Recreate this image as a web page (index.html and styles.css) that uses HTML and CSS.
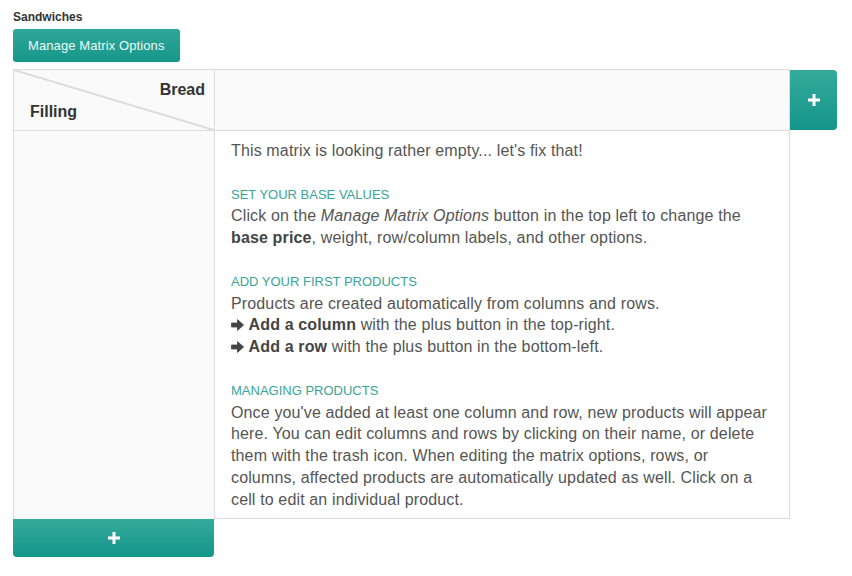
FILE: index.html
```html
<!DOCTYPE html>
<html>
<head>
<meta charset="utf-8">
<link rel="stylesheet" href="styles.css">
</head>
<body>
<div class="field-label">Sandwiches</div>
<button class="btn-manage">Manage Matrix Options</button>
<div class="matrix">
  <div class="corner">
    <svg class="diag" viewBox="0 0 100 100" preserveAspectRatio="none"><line x1="0" y1="0" x2="100" y2="100" stroke="#dcdcdc" stroke-width="2" vector-effect="non-scaling-stroke"/></svg>
    <div class="col-label">Bread</div>
    <div class="row-label">Filling</div>
  </div>
  <div class="head-cells"></div>
  <button class="add-col" aria-label="Add column">
    <svg width="12" height="12" viewBox="0 0 12 12"><path d="M4.5 0h3v4.5H12v3H7.5V12h-3V7.5H0v-3h4.5z" fill="#fff"/></svg>
  </button>
  <div class="row-heads"></div>
  <div class="content">
    <p>This matrix is looking rather empty... let's fix that!</p>
    <div class="block">
      <h4>Set your base values</h4>
      <p>Click on the <em>Manage Matrix Options</em> button in the top left to change the <strong>base price</strong>, weight, row/column labels, and other options.</p>
    </div>
    <div class="block">
      <h4>Add your first products</h4>
      <p>Products are created automatically from columns and rows.</p>
      <p><svg class="arrow" width="13" height="12" viewBox="0 0 13 12"><path d="M0.5 4h6V0.6L12.6 6 6.5 11.4V8h-6z" fill="#444" stroke="#444" stroke-width="0.8" stroke-linejoin="round"/></svg> <strong>Add a column</strong> with the plus button in the top-right.</p>
      <p><svg class="arrow" width="13" height="12" viewBox="0 0 13 12"><path d="M0.5 4h6V0.6L12.6 6 6.5 11.4V8h-6z" fill="#444" stroke="#444" stroke-width="0.8" stroke-linejoin="round"/></svg> <strong>Add a row</strong> with the plus button in the bottom-left.</p>
    </div>
    <div class="block">
      <h4>Managing products</h4>
      <p>Once you've added at least one column and row, new products will appear here. You can edit columns and rows by clicking on their name, or delete them with the trash icon. When editing the matrix options, rows, or columns, affected products are automatically updated as well. Click on a cell to edit an individual product.</p>
    </div>
  </div>
  <button class="add-row" aria-label="Add row">
    <svg width="12" height="12" viewBox="0 0 12 12"><path d="M4.5 0h3v4.5H12v3H7.5V12h-3V7.5H0v-3h4.5z" fill="#fff"/></svg>
  </button>
</div>
</body>
</html>
```
FILE: styles.css
```css
* { box-sizing: border-box; }
body {
  margin: 0;
  padding: 9px 13px 0;
  background: #fff;
  font-family: "Liberation Sans", Arial, Helvetica, sans-serif;
  color: #555;
}
.field-label {
  font-size: 12px;
  font-weight: bold;
  color: #333;
  line-height: 16px;
  margin-bottom: 4px;
}
.btn-manage {
  display: block;
  height: 33px;
  padding: 0 15px;
  border: none;
  border-radius: 3px;
  background: linear-gradient(#2ea898, #17968a);
  color: #eefaf8;
  font-family: inherit;
  font-size: 13px;
  letter-spacing: 0.1px;
  cursor: pointer;
}
.matrix {
  margin-top: 7px;
  display: grid;
  grid-template-columns: 202px 575px 47px;
  grid-template-rows: 62px auto 38px;
}
.corner {
  position: relative;
  border: 1px solid #ddd;
  background: #fafafa;
  padding: 9px 9px 0 16px;
  font-size: 16px;
  line-height: 22px;
  font-weight: bold;
  color: #333;
}
.diag {
  position: absolute;
  left: 0; top: 0;
  width: 100%; height: 100%;
}
.col-label { position: relative; text-align: right; }
.row-label { position: relative; }
.head-cells {
  border-top: 1px solid #ddd;
  border-right: 1px solid #ddd;
  border-bottom: 1px solid #ddd;
  background: #fafafa;
}
.add-col, .add-row {
  border: none;
  background: linear-gradient(#34aa9b, #14958a);
  display: flex;
  align-items: center;
  justify-content: center;
  padding: 0;
  cursor: pointer;
}
.add-col {
  margin-top: 1px;
  height: 60px;
  border-radius: 0 4px 4px 0;
}
.add-row {
  grid-column: 1;
  width: 201px;
  border-radius: 0 0 4px 4px;
}
.row-heads {
  border-left: 1px solid #ddd;
  border-right: 1px solid #ddd;
  background: #fafafa;
}
.content {
  border-right: 1px solid #ddd;
  border-bottom: 1px solid #ddd;
  background: #fff;
  padding: 9px 16px 7px;
  font-size: 16px;
  line-height: 21.8px;
  letter-spacing: 0.14px;
  color: #555;
}
.content p { margin: 0; }
.block { margin-top: 21.8px; }
.block h4 {
  margin: 0;
  font-size: 13px;
  font-weight: normal;
  text-transform: uppercase;
  letter-spacing: 0;
  color: #3aa596;
  line-height: 21.8px;
}
.content strong { color: #444; }
.arrow { vertical-align: -1px; }
```
